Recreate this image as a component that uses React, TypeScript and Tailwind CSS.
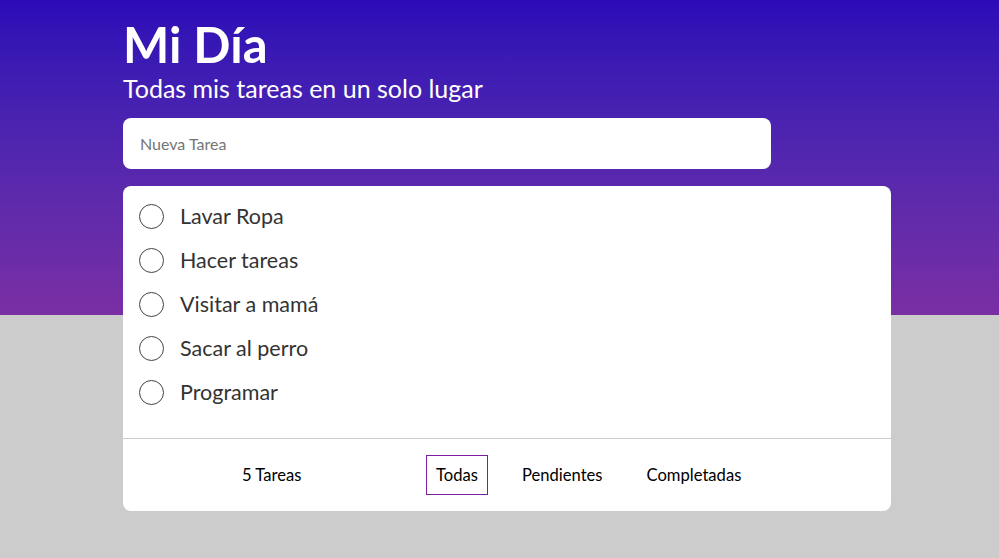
import React from 'react';

const tasks = ['Lavar Ropa', 'Hacer tareas', 'Visitar a mamá', 'Sacar al perro', 'Programar'];

const App = () => {
  return (
    <div className="min-h-[558px] w-full bg-[#cccccc] font-['Lato','Noto_Sans',sans-serif] relative">
      <div className="absolute inset-x-0 top-0 h-[315px] bg-gradient-to-b from-[#2c0ab7] to-[#7a2ea4]" />
      <div className="relative ml-[123px] w-[768px] pt-[15px]">
        <h1 className="text-[49px] leading-[58px] font-bold text-white">Mi Día</h1>
        <p className="mt-[1px] text-[25px] leading-[28px] text-white">Todas mis tareas en un solo lugar</p>
        <input
          className="mt-[16px] h-[51px] w-[648px] rounded-lg bg-white px-[17px] text-[16px] text-[#333] placeholder:text-[#757575] outline-none"
          placeholder="Nueva Tarea"
        />
        <div className="mt-[17px] rounded-lg bg-white">
          <ul className="flex flex-col pt-[8px] pb-[24px]">
            {tasks.map((t) => (
              <li key={t} className="flex h-[44px] items-center gap-[16px] pl-[16px]">
                <span className="h-[25px] w-[25px] rounded-full border border-[#444]" />
                <span className="text-[21.5px] text-[#333]">{t}</span>
              </li>
            ))}
          </ul>
          <div className="flex h-[73px] items-center border-t border-[#cccccc] pl-[119px] text-[16.6px] text-black">
            <span className="w-[150px]">5 Tareas</span>
            <div className="ml-[34px] flex gap-6">
              <button className="border border-[#7b1fa2] px-[9px] py-[7px]">Todas</button>
              <button className="border border-transparent px-[9px] py-[7px]">Pendientes</button>
              <button className="border border-transparent px-[9px] py-[7px]">Completadas</button>
            </div>
          </div>
        </div>
      </div>
    </div>
  );
};

export default App;
